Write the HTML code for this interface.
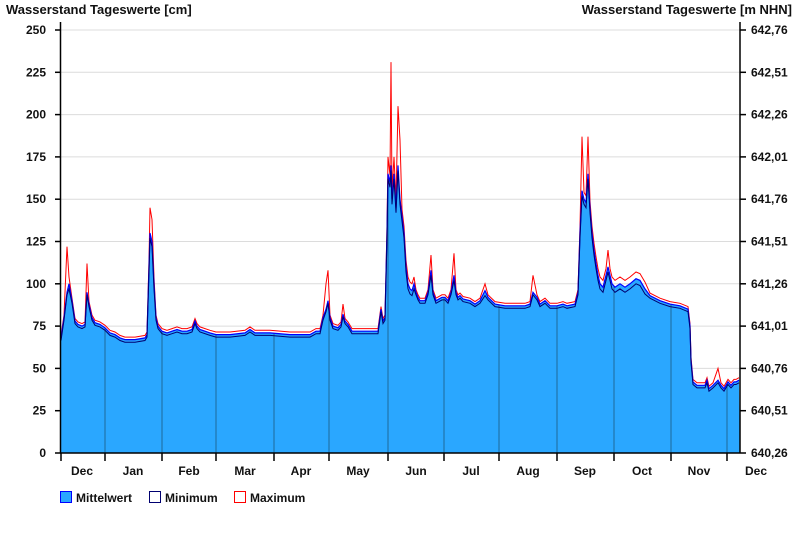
<!DOCTYPE html>
<html><head><meta charset="utf-8">
<style>
html,body{margin:0;padding:0;background:#fff;}
svg{display:block;font-family:"Liberation Sans",Arial,sans-serif;font-weight:bold;}
</style></head>
<body>
<svg id="s" width="800" height="550" viewBox="0 0 800 550">
<defs><clipPath id="cp"><polygon id="cpp" points="0,0"/></clipPath></defs>
<text x="6" y="14" font-size="13" fill="#111">Wasserstand Tageswerte [cm]</text>
<text x="792" y="14" font-size="13" fill="#111" text-anchor="end">Wasserstand Tageswerte [m NHN]</text>
<g id="grid" stroke="#dcdcdc" stroke-width="1"></g>
<g id="plot"></g>
<g id="axes" stroke="#000" stroke-width="1.5"></g>
<g id="labels" font-size="12" fill="#111"></g>
<g font-size="12" fill="#111">
<rect x="60.5" y="491.5" width="11" height="11" fill="#2aa7ff" stroke="#0000ff"/>
<text x="76" y="502">Mittelwert</text>
<rect x="149.5" y="491.5" width="11" height="11" fill="#fff" stroke="#000070"/>
<text x="165" y="502">Minimum</text>
<rect x="234.5" y="491.5" width="11" height="11" fill="#fff" stroke="#ff0000"/>
<text x="250" y="502">Maximum</text>
</g>
</svg>
<script>
var NS="http://www.w3.org/2000/svg";
function el(p,t,a,txt){var e=document.createElementNS(NS,t);for(var k in a)e.setAttribute(k,a[k]);if(txt!=null)e.textContent=txt;document.getElementById(p).appendChild(e);return e;}
var X0=61,X1=740,Y0=453,K=1.692;
function Y(v){return Y0-v*K;}
var L=["250","225","200","175","150","125","100","75","50","25","0"];
var R=["642,76","642,51","642,26","642,01","641,76","641,51","641,26","641,01","640,76","640,51","640,26"];
for(var i=0;i<=10;i++){var v=250-25*i,y=Y(v);
 if(v>0)el("grid","line",{x1:X0,x2:X1,y1:y,y2:y});
 el("axes","line",{x1:55,x2:X0,y1:y,y2:y});
 el("axes","line",{x1:X1,x2:X1+6,y1:y,y2:y});
 el("labels","text",{x:46,y:y+4,"text-anchor":"end"},L[i]);
 el("labels","text",{x:751,y:y+4},R[i]);}
var mean=[[61,68],[64,80],[67,95],[69,100],[72,90],[75,78],[78,76],[82,75],[85,76],[87,95],[89,88],[92,80],[95,77],[100,76],[105,74],[110,71],[115,70],[120,68],[125,67],[135,67],[145,68],[147,70],[149,110],[150,130],[152,125],[154,100],[156,80],[158,75],[162,72],[167,71],[172,72],[177,73],[182,72],[187,72],[192,73],[195,78],[197,75],[200,73],[210,71],[216,70],[230,70],[245,71],[250,73],[255,71],[270,71],[290,70],[310,70],[316,72],[320,72],[323,80],[326,85],[328,90],[330,80],[333,75],[338,74],[341,76],[343,82],[345,78],[348,76],[352,72],[370,72],[378,72],[381,85],[383,78],[385,80],[387,130],[388,165],[390,160],[391,170],[392,150],[394,165],[396,145],[398,170],[400,150],[402,140],[404,130],[406,110],[408,100],[410,97],[412,96],[414,100],[416,95],[418,92],[420,90],[425,90],[428,95],[431,108],[433,95],[436,90],[442,92],[445,92],[448,90],[451,95],[454,105],[456,95],[458,92],[460,93],[463,91],[470,90],[475,88],[480,90],[485,96],[488,92],[495,88],[505,87],[525,87],[530,88],[533,95],[537,92],[540,88],[545,90],[550,87],[557,87],[563,88],[567,87],[575,88],[578,95],[580,130],[582,155],[584,150],[586,148],[588,165],[590,145],[592,130],[594,120],[596,112],[598,105],[600,100],[603,98],[606,105],[608,110],[610,105],[612,100],[615,98],[620,100],[625,98],[630,100],[636,103],[640,102],[645,97],[650,93],[660,90],[670,88],[680,87],[688,85],[690,75],[691,55],[693,42],[697,40],[705,40],[707,43],[709,38],[713,40],[718,43],[721,40],[724,38],[728,42],[731,40],[734,42],[736,42],[739,43]];
var pk={67:122,87:112,150:145,152:138,196:85,326:100,328:108,343:88,380:110,388:175,391:231,394:175,398:205,400:185,431:117,454:118,486:103,533:105,582:187,588:187,608:120,689:97,718:50};
function pts(f){return mean.map(function(p){return p[0]+","+Y(f(p)).toFixed(1);}).join(" ");}
var maxp=pts(function(p){return pk[p[0]]!==undefined?pk[p[0]]:p[1]+(p[1]>95?4:1.5);});
var fillp=X0+","+Y0+" "+pts(function(p){return p[1];})+" "+X1+","+Y0;
document.getElementById("cpp").setAttribute("points",fillp);
el("plot","polygon",{points:fillp,fill:"#2aa7ff"});
var g=el("plot","g",{"clip-path":"url(#cp)"});
[105,162,216,274,329,388,444,499,557,614,671,727].forEach(function(x){var l=document.createElementNS(NS,"line");l.setAttribute("x1",x);l.setAttribute("x2",x);l.setAttribute("y1",Y0);l.setAttribute("y2",20);l.setAttribute("stroke","#1f6a9a");l.setAttribute("stroke-width","1");g.appendChild(l);});
el("plot","polyline",{points:maxp,fill:"none",stroke:"#ff0000","stroke-width":1});
el("plot","polyline",{points:pts(function(p){return p[1];}),fill:"none",stroke:"#0000ff","stroke-width":1.2});
el("plot","polyline",{points:pts(function(p){return p[1]-(p[1]>95?3:1.5);}),fill:"none",stroke:"#000070","stroke-width":1});
el("axes","line",{x1:60.5,x2:60.5,y1:22,y2:Y0});
el("axes","line",{x1:X1,x2:X1,y1:22,y2:Y0});
el("axes","line",{x1:60,x2:X1,y1:Y0,y2:Y0});
[61,105,162,216,274,329,388,444,499,557,614,671,727].forEach(function(x){el("axes","line",{x1:x,x2:x,y1:Y0,y2:Y0+8});});
var m=[["Dec",82],["Jan",133],["Feb",189],["Mar",245],["Apr",301],["May",358],["Jun",416],["Jul",471],["Aug",528],["Sep",585],["Oct",642],["Nov",699],["Dec",756]];
m.forEach(function(a){el("labels","text",{x:a[1],y:475,"text-anchor":"middle"},a[0]);});
</script>
</body></html>
